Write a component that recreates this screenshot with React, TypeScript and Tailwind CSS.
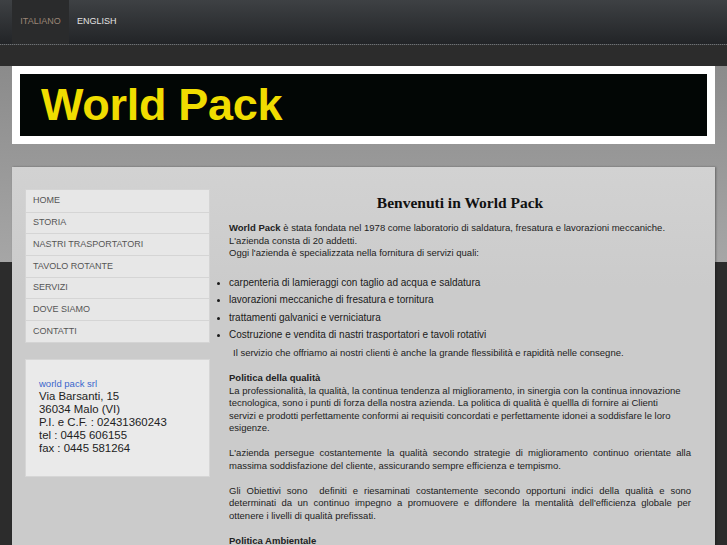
import React from "react";

const nav = [
  "HOME",
  "STORIA",
  "NASTRI TRASPORTATORI",
  "TAVOLO ROTANTE",
  "SERVIZI",
  "DOVE SIAMO",
  "CONTATTI",
];

const servizi = [
  "carpenteria di lamieraggi con taglio ad acqua e saldatura",
  "lavorazioni meccaniche di fresatura e tornitura",
  "trattamenti galvanici e verniciatura",
  "Costruzione e vendita di nastri trasportatori e tavoli rotativi",
];

function TopBar() {
  return (
    <div className="h-[45px] bg-[linear-gradient(to_bottom,#3e4144,#222427)] border-b border-dotted border-[#6f7173] flex items-stretch pl-3 font-['Liberation_Sans',Arial,sans-serif] text-[9px]">
      <div className="w-[57px] bg-[#2a2b2c] flex items-center justify-center text-[#9a8676]">
        ITALIANO
      </div>
      <div className="flex items-center pl-2 text-[#e2e2e2]">ENGLISH</div>
    </div>
  );
}

function Logo() {
  return (
    <div className="mx-3 mt-[21px] bg-white p-2">
      <div className="h-[62px] bg-[#020605] flex items-center pl-[21px]">
        <span className="text-[45px] leading-none font-bold text-[#f0dc00] tracking-[-0.3px] font-['Liberation_Sans',Arial,sans-serif] -mt-[2px]">
          World Pack
        </span>
      </div>
    </div>
  );
}

function Sidebar() {
  return (
    <div className="w-[185px] shrink-0 font-['Liberation_Sans',Arial,sans-serif]">
      <ul className="border border-[#d4d4d4] bg-[#e7e7e7]">
        {nav.map((item, i) => (
          <li
            key={item}
            className={`h-[21.7px] flex items-center pl-[7px] text-[9px] text-[#555] ${
              i > 0 ? "border-t border-[#d5d5d5]" : ""
            }`}
          >
            {item}
          </li>
        ))}
      </ul>
      <div className="mt-[16px] h-[118px] bg-[#eaeaea] border border-[#d6d6d6] pl-[13px] pt-[17px] text-[11.4px] leading-[13px] text-[#222]">
        <div className="text-[9.5px] text-[#3a66cc]">world pack srl</div>
        <div>Via Barsanti, 15</div>
        <div>36034 Malo (VI)</div>
        <div>P.I. e C.F. : 02431360243</div>
        <div>tel : 0445 606155</div>
        <div>fax : 0445 581264</div>
      </div>
    </div>
  );
}

function Main() {
  return (
    <div className="ml-[19px] w-[462px] font-['Liberation_Sans',Arial,sans-serif] text-[#222]">
      <h1 className="mt-[5px] text-center text-[15.5px] leading-[18px] font-bold text-[#111] font-['Liberation_Serif','Times_New_Roman',serif]">
        Benvenuti in World Pack
      </h1>
      <p className="mt-[10px] text-[9.5px] leading-[12.5px]">
        <b>World Pack</b> è stata fondata nel 1978 come laboratorio di saldatura, fresatura e lavorazioni meccaniche.
        <br />
        L'azienda consta di 20 addetti.
        <br />
        Oggi l'azienda è specializzata nella fornitura di servizi quali:
      </p>
      <ul className="mt-[14px] list-disc pl-0 text-[10px] leading-[17.5px] text-[#1a1a1a] marker:text-[9px]">
        {servizi.map((s) => (
          <li key={s}>{s}</li>
        ))}
      </ul>
      <p className="mt-[3.5px] pl-[4px] text-[9.5px] leading-[12.5px]">
        Il servizio che offriamo ai nostri clienti è anche la grande flessibilità e rapidità nelle consegne.
      </p>
      <p className="mt-[12.5px] text-[9.5px] leading-[12.5px]">
        <b>Politica della qualità</b>
        <br />
        La professionalità, la qualità, la continua tendenza al miglioramento, in sinergia con la continua innovazione
        <br />
        tecnologica, sono i punti di forza della nostra azienda. La politica di qualità è quellla di fornire ai Clienti
        <br />
        servizi e prodotti perfettamente conformi ai requisiti concordati e perfettamente idonei a soddisfare le loro
        <br />
        esigenze.
      </p>
      <p className="mt-[12.5px] text-[9.5px] leading-[12.5px] text-justify">
        L'azienda persegue costantemente la qualità secondo strategie di miglioramento continuo orientate alla massima soddisfazione del cliente, assicurando sempre efficienza e tempismo.
      </p>
      <p className="mt-[12.5px] text-[9.5px] leading-[12.5px] text-justify">
        Gli Obiettivi sono&nbsp; definiti e riesaminati costantemente secondo opportuni indici della qualità e sono determinati da un continuo impegno a promuovere e diffondere la mentalità dell'efficienza globale per ottenere i livelli di qualità prefissati.
      </p>
      <p className="mt-[12.5px] text-[9.5px] leading-[12.5px]">
        <b>Politica Ambientale</b>
      </p>
    </div>
  );
}

export default function App() {
  return (
    <div className="min-h-[545px] bg-[#2c2c2c]">
      <TopBar />
      <div className="bg-[linear-gradient(to_bottom,#8b8b8b_0px,#a6a6a6_196px,#2c2c2c_196px,#2c2c2c_100%)] pb-4">
        <Logo />
        <div className="mx-3 mt-[23px] bg-[linear-gradient(to_bottom,#d2d2d2,#cbcbcb_120px,#cbcbcb)] shadow-[1px_0_2px_rgba(0,0,0,0.35)] flex pl-[13px] pt-[22px] pb-6 min-h-[400px]">
          <Sidebar />
          <Main />
        </div>
      </div>
    </div>
  );
}
